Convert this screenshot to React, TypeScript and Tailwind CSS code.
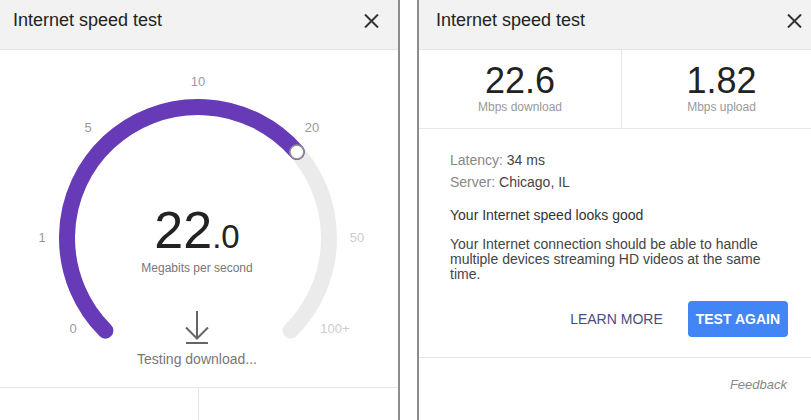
import React from "react";

const PURPLE = "#673ab7";
const CX = 202;
const CY = 188;
const R = 131;

function polar(deg: number) {
  const a = (deg * Math.PI) / 180;
  return [CX + R * Math.sin(a), CY - R * Math.cos(a)];
}

function arc(from: number, to: number) {
  const [x1, y1] = polar(from);
  const [x2, y2] = polar(to);
  const large = to - from > 180 ? 1 : 0;
  return `M ${x1} ${y1} A ${R} ${R} 0 ${large} 1 ${x2} ${y2}`;
}

function Header() {
  return (
    <div className="flex h-[50px] shrink-0 items-start justify-between border-b border-[#e2e2e2] bg-[#f2f2f2] pl-[17px] pr-[19px] pt-[9px]">
      <span className="text-[18px] leading-[22px] text-[#222]">Internet speed test</span>
      <svg width="15" height="14" viewBox="0 0 15 14" className="mt-[5px]">
        <path d="M1 0.5 L14 13.5 M14 0.5 L1 13.5" stroke="#333" strokeWidth="2" />
      </svg>
    </div>
  );
}

function Stat({ value, label, divider }: { value: string; label: string; divider?: boolean }) {
  return (
    <div className={`flex flex-col items-center pt-[13px] ${divider ? "border-r border-[#e6e6e6]" : ""}`}>
      <span className="text-[36px] leading-none text-[#222]">{value}</span>
      <span className="mt-[1px] text-[12px] leading-[14px] text-[#999]">{label}</span>
    </div>
  );
}

export default function App() {
  const knob = polar(49);

  return (
    <div className="flex h-[420px] w-[811px] overflow-hidden bg-white font-['Liberation_Sans',Arial,sans-serif]">
      {/* Gauge panel */}
      <div className="-ml-1 flex w-[404px] shrink-0 flex-col border-r-2 border-[#8c8c8c]">
        <Header />
        <div className="relative flex h-[337px] shrink-0 flex-col items-center">
          <svg className="absolute inset-0" width="402" height="337" viewBox="0 0 402 337">
            <path d={arc(-135, 135)} fill="none" stroke="#ebebeb" strokeWidth="16" strokeLinecap="round" />
            <path d={arc(-135, 49)} fill="none" stroke={PURPLE} strokeWidth="16" strokeLinecap="round" />
            <circle cx={knob[0]} cy={knob[1]} r="7" fill="white" stroke="#8d8d8d" strokeWidth="1.5" />
          </svg>

          <span className="absolute left-[202px] top-[32px] -translate-x-1/2 -translate-y-1/2 text-[13px] text-[#999]">10</span>
          <span className="absolute left-[92px] top-[78px] -translate-x-1/2 -translate-y-1/2 text-[13px] text-[#999]">5</span>
          <span className="absolute left-[316px] top-[78px] -translate-x-1/2 -translate-y-1/2 text-[13px] text-[#999]">20</span>
          <span className="absolute left-[46px] top-[188px] -translate-x-1/2 -translate-y-1/2 text-[13px] text-[#999]">1</span>
          <span className="absolute left-[361px] top-[188px] -translate-x-1/2 -translate-y-1/2 text-[13px] text-[#ccc]">50</span>
          <span className="absolute left-[77px] top-[279px] -translate-x-1/2 -translate-y-1/2 text-[13px] text-[#999]">0</span>
          <span className="absolute left-[339px] top-[279px] -translate-x-1/2 -translate-y-1/2 text-[13px] text-[#ccc]">100+</span>

          <div className="relative mt-[154px] flex items-baseline text-[#222]">
            <span className="text-[52px] leading-none">22</span>
            <span className="text-[33px] leading-none">.0</span>
          </div>
          <span className="relative mt-[5px] text-[12px] leading-[14px] text-[#777]">Megabits per second</span>
          <svg className="relative mt-[35px]" width="26" height="36" viewBox="0 0 26 36">
            <path d="M13 1 V29 M2 17.5 L13 28.5 L24 17.5 M2 33 H24" fill="none" stroke="#666" strokeWidth="2" />
          </svg>
          <span className="relative mt-[5px] text-[14px] leading-[16px] text-[#777]">Testing download...</span>
        </div>
        <div className="grid flex-1 grid-cols-[203px_1fr] border-t border-[#e6e6e6]">
          <div className="border-r border-[#e6e6e6]" />
          <div />
        </div>
      </div>

      <div className="w-[17px] shrink-0" />

      {/* Results panel */}
      <div className="flex w-[404px] shrink-0 flex-col border-l-2 border-[#8c8c8c]">
        <Header />
        <div className="grid h-[79px] shrink-0 grid-cols-[203px_1fr] border-b border-[#e6e6e6]">
          <Stat value="22.6" label="Mbps download" divider />
          <Stat value="1.82" label="Mbps upload" />
        </div>
        <div className="border-b border-[#e6e6e6] pb-[20px] pl-[31px] pr-[33px] pt-[20px] text-[14px]">
          <p className="leading-[22px]">
            <span className="text-[#888]">Latency: </span>
            <span className="text-[#444]">34 ms</span>
          </p>
          <p className="leading-[22px]">
            <span className="text-[#888]">Server: </span>
            <span className="text-[#444]">Chicago, IL</span>
          </p>
          <p className="mt-[11px] leading-[22px] text-[#333]">Your Internet speed looks good</p>
          <p className="mt-[11px] leading-[15px] text-[#444]">
            Your Internet connection should be able to handle multiple devices streaming HD videos at the same time.
          </p>
          <div className="mt-[19px] flex items-center justify-end gap-[25px]">
            <button className="text-[14px] leading-[16px] text-[#4a4c83]">LEARN MORE</button>
            <button className="h-[36px] rounded-sm bg-[#4285f4] px-[8px] text-[14px] font-bold text-white">
              TEST AGAIN
            </button>
          </div>
        </div>
        <div className="pr-[34px] pt-[19px] text-right text-[13px] italic leading-[16px] text-[#888]">Feedback</div>
      </div>
    </div>
  );
}
